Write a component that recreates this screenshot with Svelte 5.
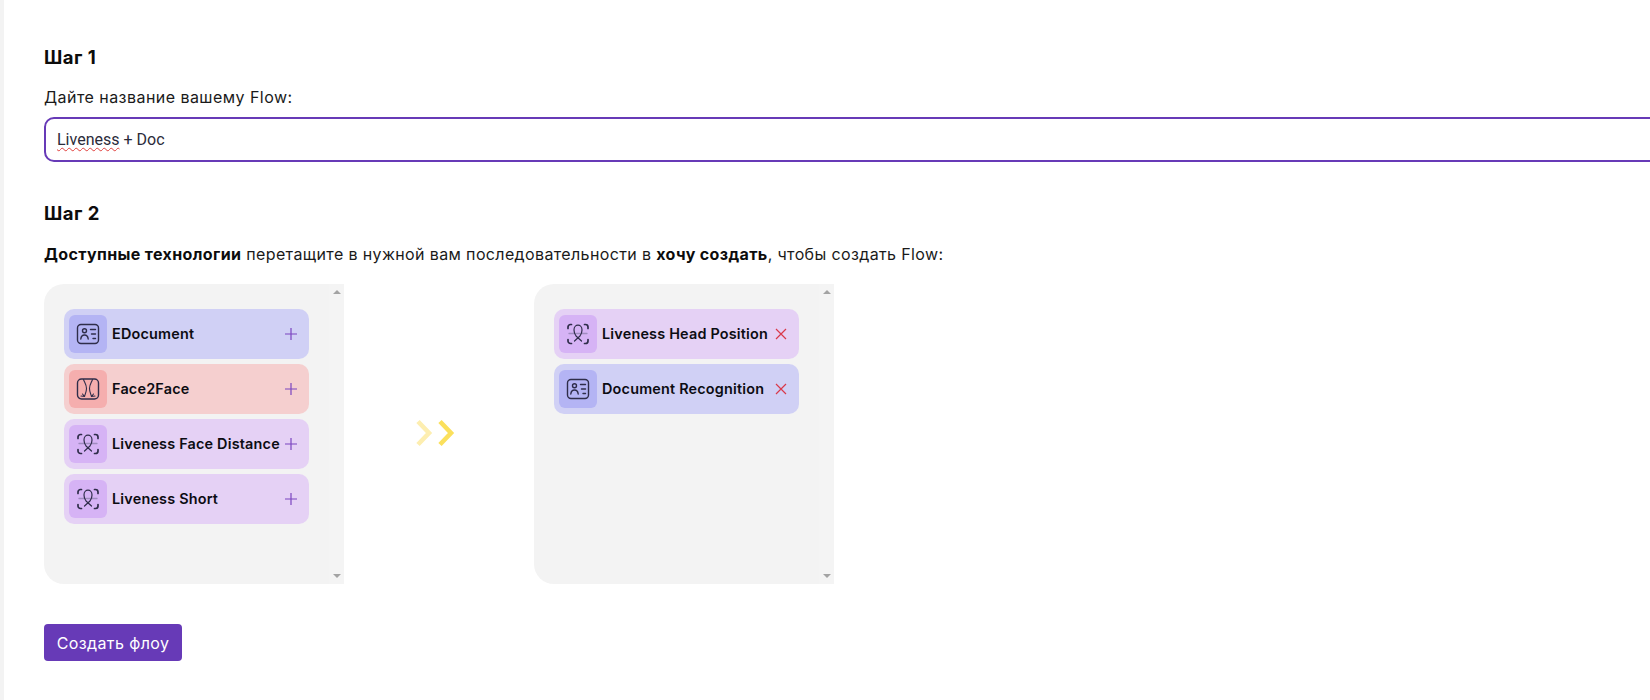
<script lang="ts">
  const available = [
    { name: 'EDocument', kind: 'doc' },
    { name: 'Face2Face', kind: 'face' },
    { name: 'Liveness Face Distance', kind: 'live' },
    { name: 'Liveness Short', kind: 'live' }
  ]
  const selected = [
    { name: 'Liveness Head Position', kind: 'live' },
    { name: 'Document Recognition', kind: 'doc' }
  ]
</script>

{#snippet kindIcon(kind)}
  <svg class="kind-icon" viewBox="0 0 24 24" fill="none" stroke="#2f2d4a" stroke-width="1.4" stroke-linecap="round" stroke-linejoin="round">
    {#if kind === 'doc'}
      <rect x="1.5" y="2.5" width="21" height="19" rx="3.5" />
      <circle cx="8.5" cy="8.800" r="2" />
      <path d="M4.800 17c.3-2.800 1.800-4 3.700-4s3.400 1.200 3.700 4" />
      <path d="M14.500 7.500h5M15.500 12h4M17 16.500h2.500" />
    {:else if kind === 'face'}
      <rect x="1.500" y="2" width="21" height="20" rx="4" />
      <path d="M7.500 2.500c1 3 3 5 3 9 0 3-1.200 5-2 8M8.500 19.500 6.500 17M8.500 19.500 5 19" stroke-width="1.100" />
      <path d="M16.500 2.500c-1 3-3 5-3 9 0 3 1.200 5 2 8M15.500 19.500l2-2.500M15.500 19.500l3.500-.5" stroke-width="1.100" />
    {:else}
      <path d="M2 6.500V5a2.500 2.500 0 0 1 2.500-2.500H5.500M18.500 2.500h1A2.500 2.500 0 0 1 22 5v1.500M2 17.500V19a2.500 2.500 0 0 0 2.500 2.500H5.500M18.500 21.500h1A2.500 2.500 0 0 0 22 19v-1.500" stroke-width="1.700" />
      <path d="M3 11.500h18" stroke="#a08cc0" stroke-width="1.300" />
      <path d="M8.500 19 14 14C15.300 12.300 16 10 16 8c0-3-2-4.800-4-4.800S8 5 8 8c0 2 .7 4.300 2 6l5.500 5" stroke-width="1.200" />
    {/if}
  </svg>
{/snippet}

{#snippet panel(items, removable)}
  <div class="panel">
    <div class="cards">
      {#each items as item}
        <div class="card {item.kind}">
          <span class="tile">{@render kindIcon(item.kind)}</span>
          <span class="card-name">{item.name}</span>
          {#if removable}
            <svg class="action" viewBox="0 0 12 12" stroke="#d9394a" stroke-width="1.200"><path d="M1 1l10 10M11 1L1 11" /></svg>
          {:else}
            <svg class="action" viewBox="0 0 12 12" stroke="#7b45c0" stroke-width="1.200"><path d="M6 0v12M0 6h12" /></svg>
          {/if}
        </div>
      {/each}
    </div>
    <div class="scrollbar">
      <span class="arrow up"></span>
      <span class="arrow down"></span>
    </div>
  </div>
{/snippet}

<main class="page">
  <h2>Шаг 1</h2>
  <p class="label">Дайте название вашему Flow:</p>
  <div class="name-input"><span class="misspelled">Liveness</span> + Doc</div>

  <h2 class="second">Шаг 2</h2>
  <p class="hint"><b>Доступные технологии</b> перетащите в нужной вам последовательности в <b>хочу создать</b>, чтобы создать Flow:</p>

  <div class="boards">
    {@render panel(available, false)}
    <div class="between">
      <svg width="40" height="28" viewBox="0 0 40 28" fill="none" stroke-width="4.600">
        <path d="M2 2.500 13 14 2 25.500" stroke="#fdeeb0" />
        <path d="M24 2.500 35 14 24 25.500" stroke="#fbe05c" />
      </svg>
    </div>
    {@render panel(selected, true)}
  </div>

  <button class="create">Создать флоу</button>
</main>

<style>
  :global(body) {
    background: #fff;
    overflow: hidden;
  }

  .page {
    box-sizing: border-box;
    width: 1650px;
    height: 700px;
    overflow: hidden;
    border-left: 4px solid #f3f3f3;
    padding: 46px 0 0 40px;
    font-family: Inter, "Noto Sans", sans-serif;
    color: #1a1a1a;
  }

  h2 {
    margin: 0;
    font-size: 18.500px;
    line-height: 22px;
    font-weight: 700;
    letter-spacing: 0.5px;
    color: #0c0c0c;
  }

  h2.second {
    margin-top: 40px;
  }

  .label {
    margin: 19px 0 0;
    font-size: 16px;
    line-height: 20px;
    letter-spacing: 0.45px;
  }

  .name-input {
    box-sizing: border-box;
    width: 1640px;
    height: 45px;
    margin-top: 10px;
    padding-left: 11px;
    border: 2px solid #673ab7;
    border-radius: 10px;
    font-family: Roboto, sans-serif;
    font-size: 16px;
    line-height: 41px;
    color: #2b2b3a;
  }

  .misspelled {
    text-decoration: underline wavy #e0403d 1px;
    text-underline-offset: 2px;
  }

  .hint {
    margin: 20px 0 0;
    font-size: 16px;
    line-height: 20px;
    letter-spacing: 0.37px;
  }

  .hint b {
    font-weight: 700;
    color: #0c0c0c;
  }

  .boards {
    display: flex;
    margin-top: 20px;
  }

  .panel {
    display: flex;
    justify-content: space-between;
    width: 300px;
    height: 300px;
    background: #f3f3f3;
    border-radius: 20px 0 0 20px;
  }

  .cards {
    display: flex;
    flex-direction: column;
    gap: 5px;
    width: 245px;
    margin: 25px 0 0 20px;
  }

  .card {
    display: flex;
    align-items: center;
    box-sizing: border-box;
    height: 50px;
    padding: 0 5px;
    border-radius: 10px;
  }

  .card.doc { background: #d0d0f5; }
  .card.face { background: #f5cfcf; }
  .card.live { background: #e5d1f5; }

  .tile {
    display: flex;
    align-items: center;
    justify-content: center;
    width: 38px;
    height: 38px;
    flex: none;
    border-radius: 6px;
  }

  .doc .tile { background: #b4b4f4; }
  .face .tile { background: #f5aeae; }
  .live .tile { background: #d6b3f5; }

  .kind-icon {
    width: 24px;
    height: 24px;
  }

  .card-name {
    flex: 1;
    margin-left: 5px;
    padding-bottom: 2px;
    font-size: 14.400px;
    font-weight: 600;
    letter-spacing: 0.2px;
    white-space: nowrap;
    color: #0c0c12;
  }

  .action {
    width: 12px;
    height: 12px;
    flex: none;
    margin-right: 7px;
  }

  .scrollbar {
    display: flex;
    flex-direction: column;
    justify-content: space-between;
    align-items: center;
    box-sizing: border-box;
    width: 15px;
    padding: 6px 0;
    background: #f4f4f4;
  }

  .arrow {
    width: 0;
    height: 0;
    border-left: 4px solid transparent;
    border-right: 4px solid transparent;
  }

  .arrow.up { border-bottom: 4px solid #a3a3a3; }
  .arrow.down { border-top: 4px solid #a3a3a3; }

  .between {
    display: flex;
    align-items: center;
    justify-content: center;
    width: 190px;
    padding: 0 6px 2px 0;
    box-sizing: border-box;
  }

  .create {
    display: block;
    width: 138px;
    height: 37px;
    margin-top: 40px;
    padding: 0;
    border: none;
    border-radius: 4px;
    background: #673ab7;
    color: #fff;
    font-family: inherit;
    font-size: 16px;
    letter-spacing: 0.4px;
  }
</style>
